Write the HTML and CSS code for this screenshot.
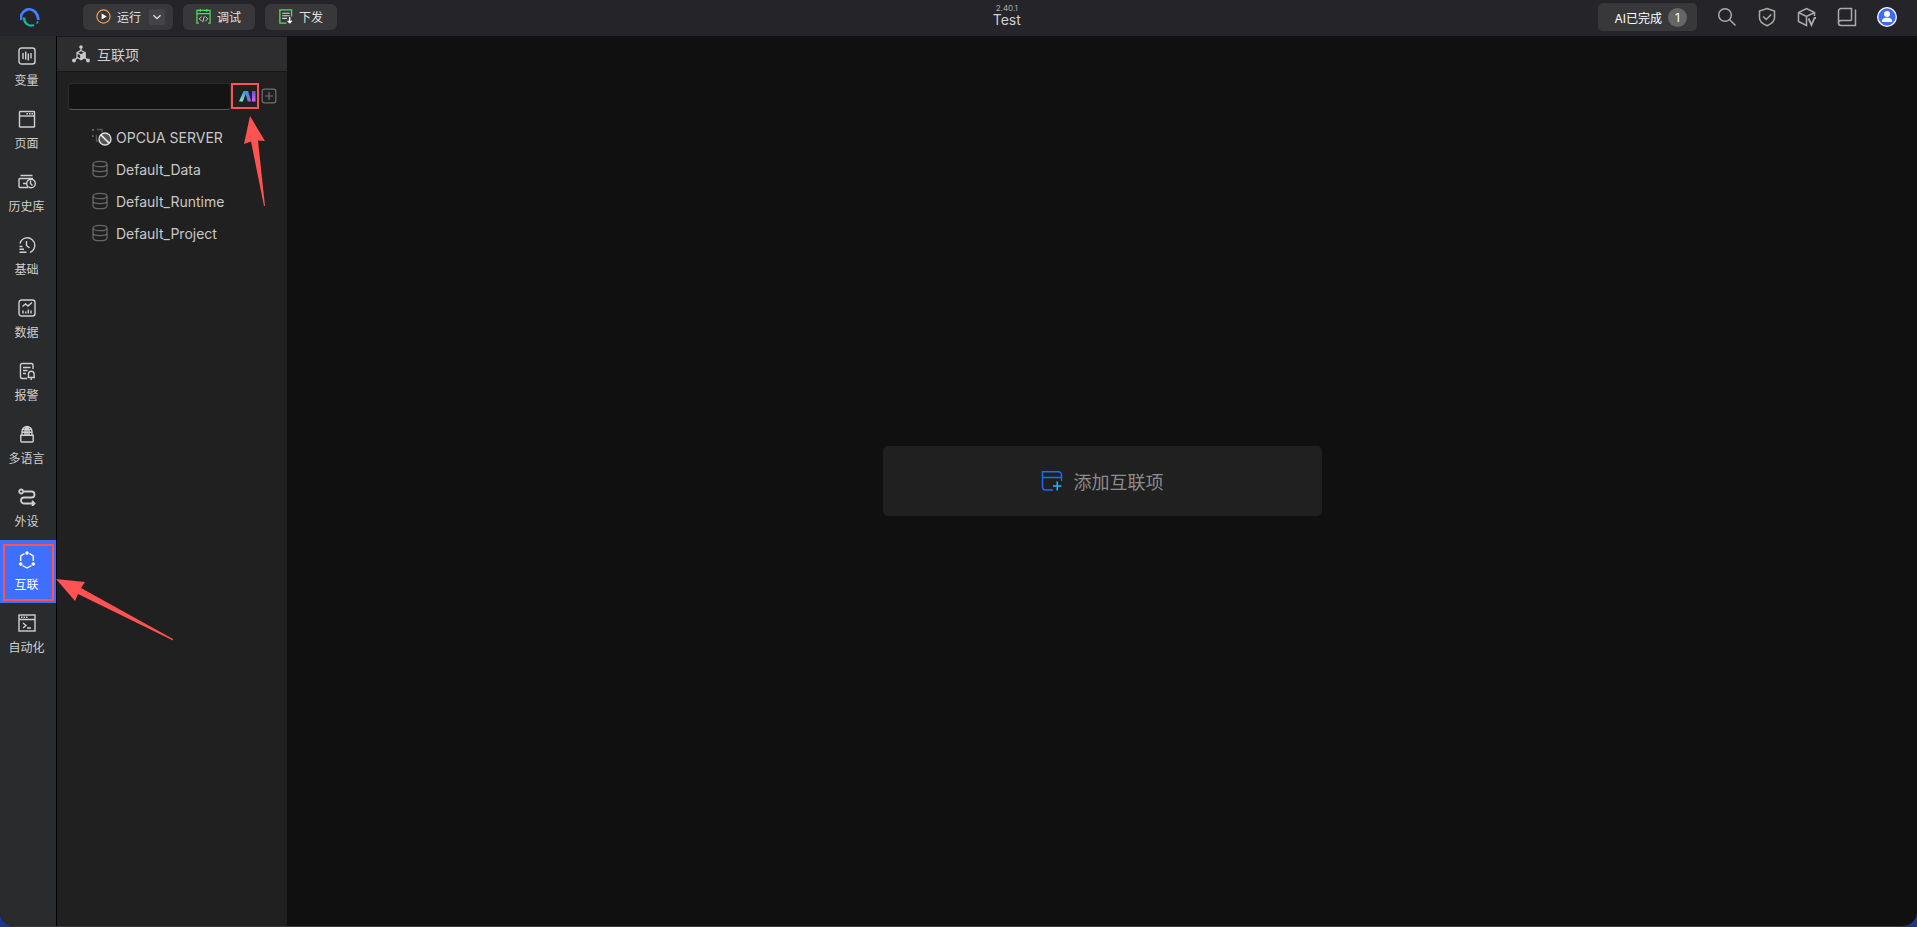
FILE: index.html
```
<!DOCTYPE html>
<html lang="zh-CN">
<head>
    <meta charset="UTF-8">
    <meta name="viewport" content="width=device-width, initial-scale=1.0">
    <title>Test</title>
    <link rel="stylesheet" href="styles.css">
</head>
<body>

<div class="app">
    <header class="topbar">
        <svg class="logo" viewBox="0 0 20 20" fill="none">
            <path d="M1.300 12A8.300 8.300 0 0 1 15.500 4.200Q17.800 7 18.500 12" stroke="#4080ff" stroke-width="2.800"/>
            <path d="M4.300 9.500A7 7 0 0 0 14 17" stroke="#12b3a0" stroke-width="2.400"/>
            <path d="M16.500 15.500 18.300 13.500" stroke="#12b3a0" stroke-width="1.600"/>
        </svg>
        <div class="actions">
            <div class="action action-split">
                <button type="button" class="action-main">
                    <svg class="icon-sm" viewBox="0 0 16 16" fill="none">
                        <circle cx="8" cy="8" r="7" stroke="#f0a04b" stroke-width="1.300"/>
                        <path d="M6 4.800v6.400l5.500-3.200z" fill="#fff"/>
                    </svg>
                    运行
                </button>
                <button type="button" class="action-more" aria-label="更多">
                    <svg viewBox="0 0 10 10" fill="none" stroke="#e4e4e4" stroke-width="1.300"><path d="M1.500 3.200 5 6.700l3.500-3.500"/></svg>
                </button>
            </div>
            <button type="button" class="action">
                <svg class="icon-sm" viewBox="0 0 16 16" fill="none">
                    <path d="M3 15H1V1.500h14V15h-2M1 5h14M4.500 0v3M11.500 0v3" stroke="#4be15d" stroke-width="1.300"/>
                    <path d="M6 8 3.500 10.500 6 13M10 8l2.500 2.500L10 13M8.800 8l-1.600 6" stroke="#d8d8d8"/>
                </svg>
                调试
            </button>
            <button type="button" class="action">
                <svg class="icon-sm" viewBox="0 0 16 16" fill="none">
                    <path d="M9 15H2V1h12.500v7" stroke="#4be15d" stroke-width="1.400"/>
                    <path d="M4.500 4.500h8M4.500 7.200h8M4.500 10h5" stroke="#d8d8d8" stroke-width="1.200"/>
                    <path d="M12.500 8.500v6.500M10.300 12.600l2.200 2.200 2.200-2.200" stroke="#fff" stroke-width="1.400"/>
                </svg>
                下发
            </button>
        </div>
        <div class="project">
            <span class="version">2.40.1</span>
            <span class="name">Test</span>
        </div>
        <button type="button" class="ai-status">AI已完成<span class="count">1</span></button>
        <div class="tools">
            <button type="button" aria-label="搜索">
                <svg viewBox="0 0 20 20"><circle cx="8" cy="8" r="6.300"/><path d="m12.500 12.500 6 6"/></svg>
            </button>
            <button type="button" aria-label="安全">
                <svg viewBox="0 0 20 20"><path d="M10 1.500 17.500 4v7c0 3.500-3.500 6-7.500 7.700C6 17 2.500 14.500 2.500 11V4z"/><path d="m6.200 9.500 3 3 5-5"/></svg>
            </button>
            <button type="button" aria-label="版本">
                <svg viewBox="0 0 20 20"><path d="M17.500 9V5.500L9.500 1.500 1.500 5.500v9l8 4V9.500M1.500 5.500l8 4 8-4"/><path d="m11.500 11.500 3 6.500 3-7h1.500" stroke-width="1.800"/></svg>
            </button>
            <button type="button" aria-label="布局">
                <svg viewBox="0 0 20 20"><path d="M14.500 13.500V1.500H4a2.500 2.500 0 0 0-2.500 2.500v12a2.500 2.500 0 0 0 2.500 2.500h14.500V2.500M14.500 13.500H4A2.500 2.500 0 0 0 1.500 16"/></svg>
            </button>
            <button type="button" aria-label="用户">
                <svg class="avatar" viewBox="0 0 20 20"><circle cx="10" cy="10" r="9.300" fill="#3d6bff" stroke="#fff" stroke-width="1.300"/><circle cx="10" cy="7" r="3" fill="#fff" stroke="none"/><path d="M4.800 15c0-3 2-4.200 3.700-4.200h3c1.700 0 3.700 1.200 3.700 4.200z" fill="#fff" stroke="none"/></svg>
            </button>
        </div>
    </header>

    <div class="body">
        <nav class="nav">
            <a href="#" class="nav-item">
                <svg viewBox="0 0 18 18"><rect x="1" y="1" width="16" height="16" rx="2.500"/><path d="M5 6v6M7.700 4.500v8M10.300 6.500v7M13 6v5.500"/></svg>
                变量
            </a>
            <a href="#" class="nav-item">
                <svg viewBox="0 0 18 18"><rect x="1.500" y="1.500" width="15" height="15.500" rx=".5"/><path d="M1.500 6h15"/><path d="M8.500 3.700h6.500" stroke-dasharray="1.500 1"/></svg>
                页面
            </a>
            <a href="#" class="nav-item">
                <svg viewBox="0 0 18 18"><path d="M2.500 2.500h12M10 14.500H2a1 1 0 0 1-1-1v-7a1 1 0 0 1 1-1h13M5 10.500h3"/><circle cx="13" cy="10.500" r="4.300"/><path d="M12.500 7.500v3l2 2"/></svg>
                历史库
            </a>
            <a href="#" class="nav-item">
                <svg viewBox="0 0 18 18"><path d="M2 7.500A7.500 7.500 0 1 1 12 16.300M8.500 5v4.500l3 2.500M1.500 10.500h3M1.500 13.300h4.500M1.500 16.200h7"/></svg>
                基础
            </a>
            <a href="#" class="nav-item">
                <svg viewBox="0 0 18 18"><rect x="1" y="1" width="16" height="16" rx="2.500"/><path d="m4.500 7.500 3-2.500 2.500 2 4-3.500M5 11.500v3M7.700 12.500v2M10.300 10.500v4M13 11.500v3"/></svg>
                数据
            </a>
            <a href="#" class="nav-item">
                <svg viewBox="0 0 18 18"><path d="M9 16.500H4A1.500 1.500 0 0 1 2.500 15V3A1.500 1.500 0 0 1 4 1.500h9.500A1.500 1.500 0 0 1 15 3v4M5 5.500h7.500M5 8.500h4.500M5 11.500h3M9.500 15.500h7.500M10.500 15.500V12a2.800 2.800 0 0 1 5.600 0v3.500M12.500 17.300h1.500"/></svg>
                报警
            </a>
            <a href="#" class="nav-item">
                <svg viewBox="0 0 18 18"><path d="M4 10V6.500a5 5 0 0 1 10 0V10M7 10V6q0-3 2-4.500Q11 3 11 6v4M9 1.500V10M4.500 4.500h9M4 7.300h10M2.800 10.300h12.400V16a1 1 0 0 1-1 1H3.800a1 1 0 0 1-1-1z"/></svg>
                多语言
            </a>
            <a href="#" class="nav-item">
                <svg viewBox="0 0 18 18" class="bold"><circle cx="3.200" cy="3.500" r="2"/><path d="M5.500 3.500h8a3 3 0 0 1 0 6H6a3 3 0 0 0 0 6h10M14 13l2.500 2.500L14 18"/></svg>
                外设
            </a>
            <a href="#" class="nav-item active">
                <svg viewBox="0 0 18 18"><path d="M6.500 2.700 2.700 5v5M11.500 2.700 15.300 5v5M4.500 14.500 9 17l4.500-2.500"/><g fill="#fff" stroke="none"><circle cx="9" cy="2" r="1.800"/><circle cx="2.700" cy="13" r="1.800"/><circle cx="15.300" cy="13" r="1.800"/></g></svg>
                互联
                <span class="mark mark-nav"></span>
            </a>
            <a href="#" class="nav-item">
                <svg viewBox="0 0 18 18"><rect x="1" y="1" width="16" height="16"/><path d="M1 5.500h16M5 9l3 2.500L5 14M9 14h4"/><path d="M3 3.300h7" stroke-dasharray="1.500 1"/></svg>
                自动化
            </a>
        </nav>

        <aside class="panel">
            <h2 class="panel-title">
                <svg viewBox="0 0 18 18" fill="none" stroke="#c9c9c9" stroke-width="1.200"><path d="M9 3v3M5.500 12.500 2.500 15M12.500 12.500l3 2.500"/><path d="m9 5.500 4 2.200v4.600L9 14.500l-4-2.200V7.700zM5 7.700l4 2.200v4.600"/><path d="m9 9.900 4-2.200v4.600L9 14.500z" fill="#c9c9c9"/><g fill="#c9c9c9" stroke="none"><circle cx="9" cy="2" r="1.800"/><circle cx="2" cy="15.500" r="1.900"/><circle cx="16" cy="15.500" r="1.900"/></g></svg>
                互联项
            </h2>
            <div class="search">
                <input type="text" class="search-input" aria-label="搜索互联项">
                <button type="button" class="ai-btn" aria-label="AI">
                    <svg viewBox="0 0 17 12">
                        <defs>
                            <linearGradient id="ai-a" x1="0" y1="0" x2="0" y2="1"><stop offset="0" stop-color="#2f8dff"/><stop offset="1" stop-color="#7df0c0"/></linearGradient>
                            <linearGradient id="ai-b" x1="0" y1="0" x2="0" y2="1"><stop offset="0" stop-color="#3b93ff"/><stop offset="1" stop-color="#9a62dd"/></linearGradient>
                            <linearGradient id="ai-c" x1="0" y1="0" x2="0" y2="1"><stop offset="0" stop-color="#7148e0"/><stop offset="1" stop-color="#d46af0"/></linearGradient>
                        </defs>
                        <path d="M4.500 1h3.300L3.800 11.500H0z" fill="url(#ai-a)"/>
                        <path d="M6 1h3l3.300 10.500H8.700z" fill="url(#ai-b)"/>
                        <path d="M13 1h3.500v10.500H13z" fill="url(#ai-c)"/>
                    </svg>
                    <span class="mark mark-ai"></span>
                </button>
                <button type="button" class="add-btn" aria-label="添加">
                    <svg viewBox="0 0 16 16" fill="none" stroke="#707070" stroke-width="1.200"><rect x="1.200" y="1.200" width="13.600" height="13.600" rx="2"/><path d="M8 4v8M4 8h8"/></svg>
                </button>
            </div>
            <ul class="list">
                <li>
                    <svg class="icon-server" viewBox="0 0 20 18" fill="none"><path d="M5 1.500h5v3M4.500 7v6h2" stroke="#555" stroke-width="1.400"/><path d="M0 2h2M0 8h1.500" stroke="#777" stroke-width="1.500"/><circle cx="13" cy="11" r="6" fill="#555" stroke="#ddd" stroke-width="1.300"/><path d="m9 7 8 8" stroke="#fff" stroke-width="1.500"/></svg>
                    OPCUA SERVER
                </li>
                <li>
                    <svg viewBox="0 0 16 18" fill="none" stroke="#666" stroke-width="1.300"><ellipse cx="8" cy="4" rx="7" ry="2.700"/><path d="M1 4v10c0 1.500 3.100 2.700 7 2.700s7-1.200 7-2.700V4M1 9c0 1.500 3.100 2.600 7 2.600s7-1.100 7-2.600"/></svg>
                    Default_Data
                </li>
                <li>
                    <svg viewBox="0 0 16 18" fill="none" stroke="#666" stroke-width="1.300"><ellipse cx="8" cy="4" rx="7" ry="2.700"/><path d="M1 4v10c0 1.500 3.100 2.700 7 2.700s7-1.200 7-2.700V4M1 9c0 1.500 3.100 2.600 7 2.600s7-1.100 7-2.600"/></svg>
                    Default_Runtime
                </li>
                <li>
                    <svg viewBox="0 0 16 18" fill="none" stroke="#666" stroke-width="1.300"><ellipse cx="8" cy="4" rx="7" ry="2.700"/><path d="M1 4v10c0 1.500 3.100 2.700 7 2.700s7-1.200 7-2.700V4M1 9c0 1.500 3.100 2.600 7 2.600s7-1.100 7-2.600"/></svg>
                    Default_Project
                </li>
            </ul>
        </aside>

        <main class="content">
            <button type="button" class="add-card">
                <svg viewBox="0 0 22 22" fill="none"><path d="M12 20H4.500A3 3 0 0 1 1.500 17V1.700h16a3 3 0 0 1 3 3V11M1.500 7.500h19" stroke="#1f6bf5" stroke-width="1.400"/><path d="M16.200 11.500v9M12 16h8.500" stroke="#1fb6ff" stroke-width="1.500"/></svg>
                添加互联项
            </button>
        </main>
    </div>
</div>

<!-- guide arrows -->
<svg class="arrow arrow-ai" viewBox="0 0 22 91"><path d="M7 0 22 25 15 24.500 22 90 21 90 8 25.500 1 28z"/></svg>
<svg class="arrow arrow-nav" viewBox="0 0 118 62"><path d="M0 0 29 3 25 9 117 60 117 61.500 22 15 19 22z"/></svg>

</body>
</html>
```
FILE: styles.css
```
* {
    box-sizing: border-box;
}

body {
    margin: 0;
    background-color: #1c3590;
    color: #d0d0d0;
    font-family: Inter, "Noto Sans CJK SC", sans-serif;
    font-size: 12px;
}

button {
    padding: 0;
    border: none;
    background: none;
    color: inherit;
    font: inherit;
    cursor: pointer;
}

svg {
    display: block;
    flex: none;
}

.app {
    display: flex;
    flex-direction: column;
    height: 100vh;
    background-color: #101010;
    border-radius: 0 0 15px 15px;
    border-bottom: 1px solid #38383a;
    overflow: hidden;
}

/* top bar */
.topbar {
    display: flex;
    flex: none;
    align-items: center;
    height: 36px;
    padding: 0 10px 0 20px;
    background-color: #252529;
}

.logo {
    width: 20px;
    height: 20px;
}

.actions {
    display: flex;
    gap: 10px;
    margin-left: 43px;
    margin-bottom: 2px;
}

.action {
    display: flex;
    align-items: center;
    gap: 6px;
    height: 26px;
    padding: 0 14px 1px 13px;
    border-radius: 6px;
    background-color: #38383b;
    color: #e2e2e2;
}

.action-split {
    gap: 8px;
    padding-right: 8px;
}

.action-main {
    display: flex;
    align-items: center;
    gap: 6px;
}

.action-more {
    display: flex;
    align-items: center;
    justify-content: center;
    width: 16px;
    height: 16px;
    border-radius: 2px;
    background-color: #444448;
}

.action-more svg {
    width: 10px;
    height: 10px;
}

.icon-sm {
    width: 15px;
    height: 15px;
}

.project {
    display: flex;
    flex: 1;
    flex-direction: column;
    align-items: center;
    padding-left: 78px;
    margin-bottom: 4px;
}

.version {
    font-size: 8px;
    line-height: 8px;
    color: #aaa;
}

.name {
    font-size: 14px;
    line-height: 16px;
}

.ai-status {
    display: flex;
    align-items: center;
    gap: 6px;
    height: 28px;
    padding: 0 10px 0 16px;
    margin-bottom: 2px;
    border-radius: 5px;
    background-color: #38383a;
    color: #fff;
}

.count {
    width: 19px;
    border-radius: 50%;
    background-color: #666;
    line-height: 19px;
    text-align: center;
}

.tools {
    display: flex;
    margin-left: 10px;
    margin-bottom: 2px;
}

.tools button {
    display: flex;
    justify-content: center;
    width: 40px;
}

.tools svg {
    width: 20px;
    height: 20px;
    fill: none;
    stroke: #ababab;
    stroke-width: 1.5;
}

/* left navigation */
.body {
    display: flex;
    flex: 1;
    min-height: 0;
}

.nav {
    flex: none;
    width: 57px;
    border-right: 1px solid #000;
    background-color: #2a2b2d;
}

.nav-item {
    position: relative;
    display: flex;
    flex-direction: column;
    align-items: center;
    gap: 6px;
    height: 63px;
    padding: 11px 3px 0 0;
    color: #d0d0d0;
    line-height: 19px;
    text-decoration: none;
}

.nav-item svg {
    width: 18px;
    height: 18px;
    fill: none;
    stroke: #d0d0d0;
    stroke-width: 1.4;
}

.nav-item svg.bold {
    stroke-width: 1.8;
}

.nav-item.active {
    background-color: #3f6fff;
    color: #fff;
}

.nav-item.active svg {
    stroke: #fff;
}

/* item panel */
.panel {
    flex: none;
    width: 230px;
    background-color: #202020;
}

.panel-title {
    display: flex;
    align-items: center;
    gap: 7px;
    height: 36px;
    margin: 0;
    padding-left: 15px;
    border-top: 1px solid #1a1a1a;
    border-bottom: 1px solid #161616;
    background-color: #2d2d2f;
    font-size: 14px;
    font-weight: 400;
}

.panel-title svg {
    width: 18px;
    height: 18px;
}

.search {
    display: flex;
    align-items: center;
    padding: 11px 10px 0 11px;
}

.search-input {
    flex: 1;
    min-width: 0;
    height: 27px;
    padding: 0 8px;
    border: 1px solid #2b2b2b;
    border-bottom-color: #585858;
    border-radius: 4px;
    outline: none;
    background-color: #141414;
    color: inherit;
    font: inherit;
}

.ai-btn {
    position: relative;
    display: flex;
    align-items: center;
    justify-content: flex-end;
    width: 28px;
    height: 26px;
    margin-bottom: 1px;
    padding-right: 3px;
}

.ai-btn svg {
    width: 17px;
    height: 12px;
}

.add-btn {
    margin-left: 2px;
    margin-bottom: 1px;
}

.add-btn svg {
    width: 16px;
    height: 16px;
}

.list {
    margin: 11px 0 0;
    padding: 0;
    list-style: none;
    color: #c8c8c8;
    font-size: 14px;
}

.list li {
    display: flex;
    align-items: center;
    gap: 8px;
    height: 32px;
    padding-left: 35px;
}

.list svg {
    width: 16px;
    height: 18px;
}

.list .icon-server {
    width: 20px;
    margin-right: -4px;
}

/* main area */
.content {
    display: flex;
    flex: 1;
    align-items: center;
    justify-content: center;
}

.add-card {
    display: flex;
    align-items: center;
    justify-content: center;
    gap: 11px;
    width: 439px;
    height: 70px;
    border-radius: 5px;
    background-color: #202020;
    color: #8c8c8c;
    font-size: 18px;
}

.add-card svg {
    width: 22px;
    height: 22px;
}

/* highlights */
.mark {
    position: absolute;
    border: 2px solid #ff5252;
}

.mark-nav {
    inset: 4px 2px 2px 3px;
}

.mark-ai {
    inset: 0;
}

.arrow {
    position: absolute;
    fill: #ff5252;
    pointer-events: none;
}

.arrow-ai {
    top: 116px;
    left: 243px;
    width: 22px;
}

.arrow-nav {
    top: 579px;
    left: 56px;
    width: 118px;
}
```
